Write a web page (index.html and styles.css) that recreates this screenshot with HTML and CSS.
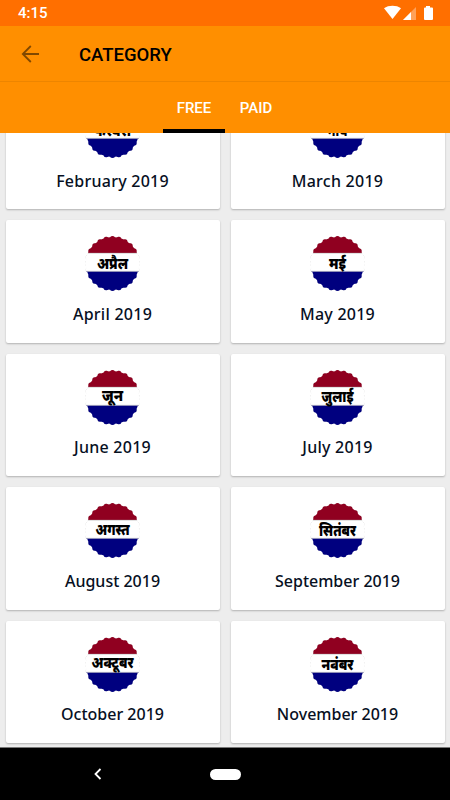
FILE: index.html
```html
<!DOCTYPE html>
<html lang="en">
<head>
  <meta charset="UTF-8" />
  <title>Category</title>
  <meta name="viewport" content="width=device-width, initial-scale=1" />
  <link rel="stylesheet" href="styles.css">
</head>
<body>
  <!-- shared month badge -->
  <svg class="defs" width="0" height="0">
    <defs>
      <mask id="scallop" maskUnits="userSpaceOnUse" x="0" y="0" width="55" height="55">
        <circle cx="27.5" cy="27.5" r="26.6" fill="#fff" />
        <circle cx="27.5" cy="27.5" r="25" fill="none" stroke="#fff" stroke-width="5" stroke-linecap="round" pathLength="24" stroke-dasharray="0 1" />
      </mask>
      <symbol id="badge" viewBox="0 0 55 55">
        <circle cx="27.5" cy="27.5" r="25" fill="none" stroke="#dcdcdc" stroke-width="5.400" stroke-linecap="round" pathLength="24" stroke-dasharray="0 1" />
        <g mask="url(#scallop)">
          <rect width="55" height="55" fill="#fff" />
          <rect width="55" height="17" fill="#900020" />
          <rect y="35.5" width="55" height="20" fill="#00007f" />
          <path d="M0 17.2h55M0 35.3h55" stroke="#aaa" stroke-width=".5" />
        </g>
      </symbol>
    </defs>
  </svg>

  <div class="screen">
    <div class="status-bar">
      <span class="clock">4:15</span>
      <svg class="status-icons" width="52" height="16" viewBox="0 0 52 16">
        <path d="M1 3.2C5.5-.1 13.5-.1 18 3.2L9.5 14z" fill="#fff" />
        <path d="M20 15L33 2v13z" fill="#fff" opacity=".35" />
        <path d="M20 15l8-8v8z" fill="#fff" />
        <path d="M43 1h4v1.5h2q1 0 1 1V14q0 1-1 1h-7q-1 0-1-1V3.500q0-1 1-1h1z" fill="#fff" />
      </svg>
    </div>

    <div class="toolbar">
      <svg class="back" width="18" height="18" viewBox="0 0 18 18">
        <path d="M18 9H1.500M9.800 1L1.800 9l8 8" fill="none" stroke="#804800" stroke-width="1.8" />
      </svg>
      <h1 class="title">CATEGORY</h1>
    </div>

    <div class="tabs">
      <div class="tab active">FREE</div>
      <div class="tab">PAID</div>
    </div>

    <div class="list">
      <div class="grid">
        <div class="card">
          <svg class="badge" viewBox="0 0 55 55"><use href="#badge" /><text x="27.5" y="33" textLength="37" lengthAdjust="spacingAndGlyphs">फरवरी</text></svg>
          <div class="month wide">February 2019</div>
        </div>
        <div class="card">
          <svg class="badge" viewBox="0 0 55 55"><use href="#badge" /><text x="27.5" y="33" textLength="20" lengthAdjust="spacingAndGlyphs">मार्च</text></svg>
          <div class="month wide">March 2019</div>
        </div>
        <div class="card">
          <svg class="badge" viewBox="0 0 55 55"><use href="#badge" /><text x="27.5" y="32.5" textLength="31" lengthAdjust="spacingAndGlyphs">अप्रैल</text></svg>
          <div class="month wide">April 2019</div>
        </div>
        <div class="card">
          <svg class="badge" viewBox="0 0 55 55"><use href="#badge" /><text x="27.5" y="32.5" textLength="17" lengthAdjust="spacingAndGlyphs">मई</text></svg>
          <div class="month wide">May 2019</div>
        </div>
        <div class="card">
          <svg class="badge" viewBox="0 0 55 55"><use href="#badge" /><text x="27.5" y="30.5" textLength="21" lengthAdjust="spacingAndGlyphs">जून</text></svg>
          <div class="month wide">June 2019</div>
        </div>
        <div class="card">
          <svg class="badge" viewBox="0 0 55 55"><use href="#badge" /><text x="27.5" y="31.5" textLength="32" lengthAdjust="spacingAndGlyphs">जुलाई</text></svg>
          <div class="month wide">July 2019</div>
        </div>
        <div class="card">
          <svg class="badge" viewBox="0 0 55 55"><use href="#badge" /><text x="27.5" y="32" textLength="34" lengthAdjust="spacingAndGlyphs">अगस्त</text></svg>
          <div class="month">August 2019</div>
        </div>
        <div class="card">
          <svg class="badge" viewBox="0 0 55 55"><use href="#badge" /><text x="27.5" y="32.5" textLength="37" lengthAdjust="spacingAndGlyphs">सितंबर</text></svg>
          <div class="month">September 2019</div>
        </div>
        <div class="card">
          <svg class="badge" viewBox="0 0 55 55"><use href="#badge" /><text x="27.5" y="30.5" textLength="42" lengthAdjust="spacingAndGlyphs">अक्टूबर</text></svg>
          <div class="month">October 2019</div>
        </div>
        <div class="card">
          <svg class="badge" viewBox="0 0 55 55"><use href="#badge" /><text x="27.5" y="32.5" textLength="32" lengthAdjust="spacingAndGlyphs">नवंबर</text></svg>
          <div class="month">November 2019</div>
        </div>
      </div>
    </div>

    <div class="nav-bar">
      <svg class="nav-back" width="8" height="12" viewBox="0 0 8 12">
        <path d="M6.500 1L1.500 6l5 5" fill="none" stroke="#fff" stroke-width="1.800" />
      </svg>
      <div class="home-pill"></div>
      <div></div>
    </div>
  </div>
</body>
</html>
```

FILE: styles.css
```css
* {
  box-sizing: border-box;
}

body {
  margin: 0;
  font-family: Roboto, sans-serif;
  background: #ededed;
}

.defs {
  display: block;
}

.screen {
  width: 450px;
  height: 800px;
  display: flex;
  flex-direction: column;
  overflow: hidden;
}

.status-bar {
  height: 26px;
  flex-shrink: 0;
  display: flex;
  align-items: center;
  justify-content: space-between;
  padding: 0 15px 0 18px;
  background: #ff6f00;
  color: #fff;
}

.clock {
  font-size: 15px;
  font-weight: 500;
}

.toolbar {
  height: 56px;
  flex-shrink: 0;
  display: flex;
  align-items: center;
  gap: 40px;
  padding: 0 0 0 21px;
  background: #ff8f00;
  border-bottom: 1px solid #ed8500;
}

.title {
  margin: 2px 0 0;
  font-size: 18.5px;
  font-weight: 500;
  color: #000;
}

.tabs {
  height: 51px;
  flex-shrink: 0;
  display: flex;
  justify-content: center;
  background: #ff8f00;
}

.tab {
  width: 62px;
  padding-top: 2px;
  border-bottom: 4px solid transparent;
  line-height: 48px;
  text-align: center;
  font-size: 15px;
  font-weight: 500;
  color: #fff;
}

.tab.active {
  border-bottom-color: #000;
}

.list {
  flex: 1;
  min-height: 0;
  overflow: hidden;
  background: #ededed;
}

/* list is scrolled part way through the first row */
.grid {
  display: grid;
  grid-template-columns: 1fr 1fr;
  grid-auto-rows: 122.4px;
  gap: 11px;
  margin-top: -46px;
  padding: 0 5.5px;
}

.card {
  display: flex;
  flex-direction: column;
  align-items: center;
  padding-top: 16px;
  background: #fff;
  border-radius: 2px;
  box-shadow: 0 1px 2px rgba(0, 0, 0, 0.25);
}

.badge {
  width: 55px;
  height: 55px;
  flex-shrink: 0;
  margin-left: -1px;
}

.badge text {
  font-family: "Noto Sans Devanagari", "Noto Sans", sans-serif;
  font-size: 16px;
  font-weight: 900;
  text-anchor: middle;
}

.month {
  margin-top: 11.6px;
  line-height: 22px;
  font-family: "Noto Sans", sans-serif;
  font-size: 16px;
  font-weight: 500;
  color: #07101f;
  white-space: nowrap;
}

.month.wide {
  letter-spacing: 0.25px;
}

.nav-bar {
  height: 53px;
  flex-shrink: 0;
  display: grid;
  grid-template-columns: 195px 60px 195px;
  align-items: center;
  justify-items: center;
  background: #000;
  border-top: 1px solid #777;
}

.home-pill {
  width: 31px;
  height: 11px;
  border-radius: 6px;
  background: #fff;
}
```
